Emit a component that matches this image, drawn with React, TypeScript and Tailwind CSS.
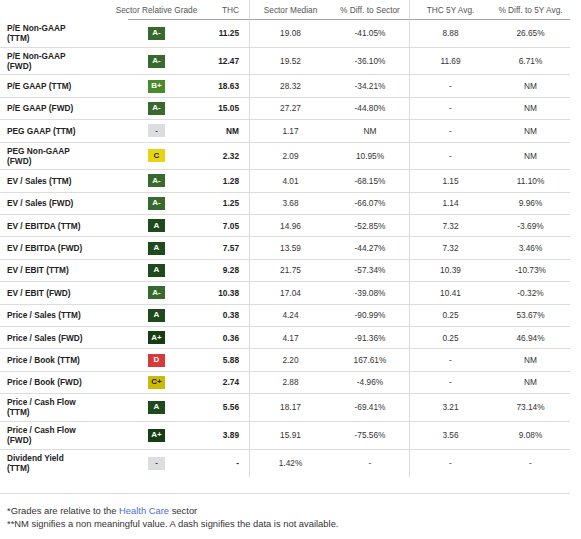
import React from 'react';

type Row = {
  label: string[];
  grade: string;
  thc: string;
  median: string;
  diffSector: string;
  avg5y: string;
  diff5y: string;
};

const gradeColors: Record<string, string> = {
  'A+': 'bg-[#173d12] text-white',
  A: 'bg-[#1f4a1d] text-white',
  'A-': 'bg-[#386a2e] text-white',
  'B+': 'bg-[#4b8a2a] text-white',
  C: 'bg-[#e8d411] text-[#222]',
  'C+': 'bg-[#cbbb08] text-[#222]',
  D: 'bg-[#d63a3a] text-white',
  '-': 'bg-[#dcdde1] text-[#333]',
};

const rows: Row[] = [
  { label: ['P/E Non-GAAP', '(TTM)'], grade: 'A-', thc: '11.25', median: '19.08', diffSector: '-41.05%', avg5y: '8.88', diff5y: '26.65%' },
  { label: ['P/E Non-GAAP', '(FWD)'], grade: 'A-', thc: '12.47', median: '19.52', diffSector: '-36.10%', avg5y: '11.69', diff5y: '6.71%' },
  { label: ['P/E GAAP (TTM)'], grade: 'B+', thc: '18.63', median: '28.32', diffSector: '-34.21%', avg5y: '-', diff5y: 'NM' },
  { label: ['P/E GAAP (FWD)'], grade: 'A-', thc: '15.05', median: '27.27', diffSector: '-44.80%', avg5y: '-', diff5y: 'NM' },
  { label: ['PEG GAAP (TTM)'], grade: '-', thc: 'NM', median: '1.17', diffSector: 'NM', avg5y: '-', diff5y: 'NM' },
  { label: ['PEG Non-GAAP', '(FWD)'], grade: 'C', thc: '2.32', median: '2.09', diffSector: '10.95%', avg5y: '-', diff5y: 'NM' },
  { label: ['EV / Sales (TTM)'], grade: 'A-', thc: '1.28', median: '4.01', diffSector: '-68.15%', avg5y: '1.15', diff5y: '11.10%' },
  { label: ['EV / Sales (FWD)'], grade: 'A-', thc: '1.25', median: '3.68', diffSector: '-66.07%', avg5y: '1.14', diff5y: '9.96%' },
  { label: ['EV / EBITDA (TTM)'], grade: 'A', thc: '7.05', median: '14.96', diffSector: '-52.85%', avg5y: '7.32', diff5y: '-3.69%' },
  { label: ['EV / EBITDA (FWD)'], grade: 'A', thc: '7.57', median: '13.59', diffSector: '-44.27%', avg5y: '7.32', diff5y: '3.46%' },
  { label: ['EV / EBIT (TTM)'], grade: 'A', thc: '9.28', median: '21.75', diffSector: '-57.34%', avg5y: '10.39', diff5y: '-10.73%' },
  { label: ['EV / EBIT (FWD)'], grade: 'A-', thc: '10.38', median: '17.04', diffSector: '-39.08%', avg5y: '10.41', diff5y: '-0.32%' },
  { label: ['Price / Sales (TTM)'], grade: 'A', thc: '0.38', median: '4.24', diffSector: '-90.99%', avg5y: '0.25', diff5y: '53.67%' },
  { label: ['Price / Sales (FWD)'], grade: 'A+', thc: '0.36', median: '4.17', diffSector: '-91.36%', avg5y: '0.25', diff5y: '46.94%' },
  { label: ['Price / Book (TTM)'], grade: 'D', thc: '5.88', median: '2.20', diffSector: '167.61%', avg5y: '-', diff5y: 'NM' },
  { label: ['Price / Book (FWD)'], grade: 'C+', thc: '2.74', median: '2.88', diffSector: '-4.96%', avg5y: '-', diff5y: 'NM' },
  { label: ['Price / Cash Flow', '(TTM)'], grade: 'A', thc: '5.56', median: '18.17', diffSector: '-69.41%', avg5y: '3.21', diff5y: '73.14%' },
  { label: ['Price / Cash Flow', '(FWD)'], grade: 'A+', thc: '3.89', median: '15.91', diffSector: '-75.56%', avg5y: '3.56', diff5y: '9.08%' },
  { label: ['Dividend Yield', '(TTM)'], grade: '-', thc: '-', median: '1.42%', diffSector: '-', avg5y: '-', diff5y: '-' },
];

const cols = 'grid grid-cols-[128px_57px_64px_82px_78px_82px_79px]';

function GradeBadge({ grade }: { grade: string }) {
  return (
    <span
      className={`inline-flex items-center justify-center w-[17px] h-[13px] text-[8px] font-bold leading-none ${gradeColors[grade]}`}
    >
      {grade}
    </span>
  );
}

export default function App() {
  return (
    <div className="w-[581px] h-[539px] bg-white text-[8.3px] text-[#333] font-['Liberation_Sans',Arial,sans-serif]">
      <div className="w-[570px]">
        <div className={`${cols} h-[20px] text-[#555] leading-[10px]`}>
          <div />
          <div className="flex items-center justify-center border-b border-[#a3a3a3] whitespace-nowrap">
            Sector Relative Grade
          </div>
          <div className="flex items-center justify-end pr-[10px] border-b border-[#a3a3a3]">THC</div>
          <div className="flex items-center justify-center border-b border-l border-[#a3a3a3] border-l-[#dcdcdc]">
            Sector Median
          </div>
          <div className="flex items-center justify-center border-b border-[#a3a3a3]">% Diff. to Sector</div>
          <div className="flex items-center justify-center border-b border-l border-[#a3a3a3] border-l-[#dcdcdc]">
            THC 5Y Avg.
          </div>
          <div className="flex items-center justify-center border-b border-[#a3a3a3]">% Diff. to 5Y Avg.</div>
        </div>

        {rows.map((r, i) => {
          const last = i === rows.length - 1;
          return (
            <div
              key={i}
              className={`${cols} leading-[10px] ${r.label.length > 1 ? 'h-[27.7px]' : 'h-[22.4px]'} ${
                last ? '' : 'border-b border-[#dcdcdc]'
              }`}
            >
              <div className="flex flex-col justify-center pl-[7px] font-bold text-[#222]">
                {r.label.map((l, j) => (
                  <span key={j} className="whitespace-nowrap">
                    {l}
                  </span>
                ))}
              </div>
              <div className="flex items-center justify-center">
                <GradeBadge grade={r.grade} />
              </div>
              <div className="flex items-center justify-end pr-[10px] font-bold text-[#222]">{r.thc}</div>
              <div className="flex items-center justify-center border-l border-[#dcdcdc]">{r.median}</div>
              <div className="flex items-center justify-center">{r.diffSector}</div>
              <div className="flex items-center justify-center border-l border-[#dcdcdc]">{r.avg5y}</div>
              <div className="flex items-center justify-center">{r.diff5y}</div>
            </div>
          );
        })}

        <div className="mt-[16px] border-t border-[#dcdcdc] pt-[10px] pl-[7px] text-[9.4px] leading-[13px] text-[#333]">
          <p>
            *Grades are relative to the <span className="text-[#4a6fd6]">Health Care</span> sector
          </p>
          <p>**NM signifies a non meaningful value. A dash signifies the data is not available.</p>
        </div>
      </div>
    </div>
  );
}
